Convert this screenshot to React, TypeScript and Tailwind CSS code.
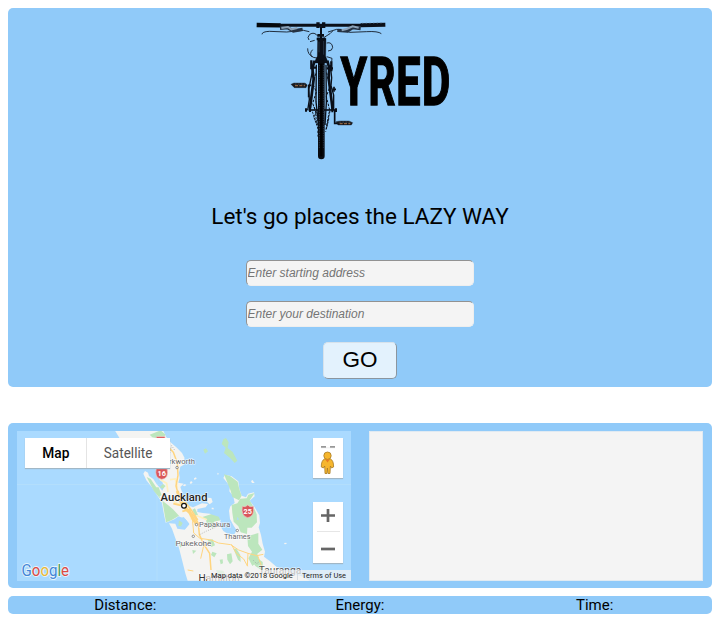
import React from "react";

function Logo() {
  return (
    <svg className="block overflow-visible" width="210" height="150" viewBox="0 0 630 450" aria-label="Tyred">
      <g fill="none" stroke="#0a0f18">
        <path d="M20 30 L92 31" strokeWidth="13" stroke="#05080c" />
        <path d="M88 31 H335" strokeWidth="9" />
        <path d="M332 31 L406 29" strokeWidth="12" />
        <path d="M336 25 L400 24" stroke="#52677d" strokeWidth="2" strokeDasharray="4 7" />
        <path d="M36 58 Q36 50 58 49 L110 51 L160 46 L178 50 M394 56 Q384 48 350 50 L300 52 L260 43 L234 51" strokeWidth="2.5" />
        <path d="M90 40 L112 38 L130 48 L158 43 M262 46 L292 48 L308 38 L332 41" strokeWidth="10" stroke="#253243" />
        <path d="M94 39 L114 36 L124 43 L142 39 M275 46 L290 42 L308 34 L326 38" strokeWidth="6" stroke="#8ba2b8" />
        <path d="M204 22 V39 M221 22 V39" strokeWidth="10" />
        <path d="M204 31 H222" strokeWidth="5" />
        <path d="M213 34 V74" strokeWidth="6" />
        <path d="M202 61 H222 M200 72 H226" strokeWidth="8" />
        <path d="M203 68 L228 70 L227 124 L235 144 H192 L202 124 Z" fill="#0a0f18" strokeWidth="1" />
        <path d="M221 78 V119 M207 80 V112" stroke="#34455b" strokeWidth="2" />
        <path d="M204 64 Q193 49 179 58 Q170 68 177 75 M173 100 Q172 118 190 127 L205 130 M180 80 L194 76 M221 68 L240 56 L248 48 M230 84 Q246 80 248 97 Q247 108 234 108 M230 125 L246 130 L245 140 M188 104 Q176 116 187 126" strokeWidth="2.5" />
        <path d="M194 137 L187 160 L191 192 L180 280 M232 137 L238 160 L236 190 L248 284" strokeWidth="8" />
        <path d="M190 155 L180 205 L176 223 L178 254 L173 286 M241 150 L245 188 L243 212 L251 240 L251 285" strokeWidth="4" />
        <path d="M184 136 V163 M244 139 V169 M181 158 H198 M230 160 H249" strokeWidth="7" />
        <path d="M199 149 L198 260 L207 340 M228 149 L229 264 L225 330" strokeWidth="4" />
        <path d="M198 175 L188 205 L199 231 L188 265 L203 307 L204 365 M230 173 L239 216 L229 245 L239 285 L232 320 L227 350" strokeWidth="3" strokeDasharray="8 4" />
        <path d="M187 290 L201 330 L196 291 M240 288 L229 342 L237 309 M191 275 L202 286 L191 305 L204 340" strokeWidth="2.5" strokeDasharray="7 3" />
        <path d="M176 285 H255" strokeWidth="5" />
        <path d="M168 280 V290 M180 278 V291 M247 277 V292 M258 280 V291" strokeWidth="6" />
        <path d="M214 144 V423" strokeWidth="20" strokeLinecap="round" stroke="#080b11" />
        <path d="M208 150 V402 M220 150 V400" strokeWidth="2" stroke="#35455a" strokeDasharray="4 3" />
        <path d="M214 146 V424" strokeWidth="7" stroke="#000" />
        <path d="M174 211 H184 M176 213 V247 M252 215 V230 M258 223 H247 M254 285 V325 H266" strokeWidth="5" />
        <path d="M123 208 L132 204 H165 L172 210 L168 218 H133 Z M258 320 L270 318 H297 L308 323 L304 330 H264 Z" fill="#18191d" strokeWidth="1" />
        <path d="M134 207 H166 M268 321 H302" stroke="#596775" strokeWidth="2" strokeDasharray="6 3" />
        <path d="M135 212 H165 M269 326 H301" stroke="#8f6341" strokeWidth="4" strokeDasharray="9 4" />
      </g>
      <g fontFamily='Roboto, "Liberation Sans", sans-serif' fontWeight="700" fontSize="202" fill="#000" stroke="#000" strokeWidth="4" strokeLinejoin="miter">
        <text x="271.5" y="269" textLength="80" lengthAdjust="spacingAndGlyphs">Y</text>
        <text x="355" y="269" textLength="82" lengthAdjust="spacingAndGlyphs">R</text>
        <text x="438" y="269" textLength="74" lengthAdjust="spacingAndGlyphs">E</text>
        <text x="515" y="269" textLength="86" lengthAdjust="spacingAndGlyphs">D</text>
      </g>
    </svg>
  );
}

function MapDrawing() {
  return (
    <svg className="block h-full w-full" viewBox="17 431 334 150" preserveAspectRatio="none">
      <rect x="17" y="431" width="334" height="150" fill="#aadaff" />
      <path d="M17 484.5 H351 M157 431 V581" stroke="#b7dffb" strokeWidth=".7" />
      <g transform="translate(110 428) scale(.333333)">
        <g fill="#f4f4f2">
          <path d="M15 8 H160 L168 26 L184 45 L199 58 L216 75 L228 98 L220 111 L211 116 L207 134 L209 150 L205 164 L221 167 L211 177 L215 189 L222 207 L227 223 L239 234 L249 238 L276 226 L294 228 L287 238 L262 243 L262 252 L278 255 L300 257 L316 270 L332 276 L329 290 L340 309 L354 318 L373 319 L380 307 L371 293 L360 273 L357 248 L361 235 L374 225 L370 205 L358 190 L360 175 L340 150 L345 140 L365 145 L385 160 L388 183 L395 203 L408 208 L414 197 L432 193 L434 205 L419 218 L434 238 L448 262 L450 285 L446 298 L453 321 L458 347 L465 371 L462 386 L480 400 L500 417 L540 434 L575 445 L598 458 H233 L226 436 L217 400 L207 360 L195 328 L186 302 L177 286 L196 287 L202 302 L224 305 L238 289 L227 274 L206 265 L193 274 L167 284 L161 254 L156 225 L143 204 L126 178 L109 157 L100 137 L105 129 L114 134 L117 144 L130 153 L140 169 L151 181 L157 188 L162 176 L157 162 L149 156 L136 119 L87 85 L39 47 Z" />
          <path d="M239 165 l4 -6 5 4 -5 5z M292 209 l12 1 4 12 -9 7 -7 -6z M305 239 l5 0 2 5 -7 0z M423 159 l5 -3 3 5 3 4 -8 0z M322 134 l5 3 -4 4z M522 345 l7 -1 1 4 -6 1z M218 172 l7 -4 4 4 -6 3z M252 151 l6 -3 2 4 -7 4z" />
        </g>
        <g fill="#bce6bd">
          <path d="M340 34 L348 30 L356 43 L353 60 L368 72 L382 98 L374 105 L361 91 L342 75 L347 59 L335 48 Z M342 139 L360 144 L383 161 L388 184 L395 203 L387 217 L367 207 L362 188 Z M365 231 L382 226 L391 212 L410 211 L415 200 L434 195 L419 217 L431 238 L440 259 L441 283 L425 299 L412 299 L411 318 L392 313 L385 295 L371 281 L367 255 Z M412 325 L445 315 L445 347 L457 365 L442 377 L447 398 L427 414 L415 391 L426 371 L414 354 Z M157 218 L173 230 L189 244 L207 263 L184 277 L168 283 L162 248 Z M110 147 L122 153 L145 187 L151 212 L132 190 Z M138 178 l8 0 9 24 -7 3z M280 65 l8 -4 6 9 -9 7z M119 20 L152 7 L167 20 L156 34 L127 28z M207 277 l13 4 -2 15 -13 -3z M277 267 L303 259 L326 266 L331 277 L312 281 L310 301 L291 291 L288 276Z M351 379 l13 -3 4 24 -8 9 -8 -14z M370 362 l9 0 12 19 1 21 -8 -7z M207 350 l12 -4 -7 13z M293 337 l15 -3 7 18 -11 5z M307 371 l13 5 -7 12 -10 -7z M329 395 l9 -1 1 12 -7 3z M247 245 l8 -4 9 20 -7 5z M149 178 l10 -10 8 6 -8 8z M247 366 l12 2 -10 10z M318 426 l22 2 8 16 -21 2z M418 391 l20 -4 20 15 1 27 -22 -14z" />
        </g>
        <path d="M203 274 l18 -7 17 20 -12 15 -13 -7 5 -10z M222 91 l11 5 -11 8z M382 266 l5 8 -6 3z" fill="#aadaff" />
        <g fill="none" stroke="#fff0bf" strokeWidth="5">
          <path d="M148 100 L153 156 L170 166 L174 192 M180 155 L196 153 L202 179 M183 214 L203 228 L226 224 M235 243 L244 273 L261 263 L291 275" />
        </g>
        <g fill="none" stroke="#ffd580" strokeWidth="4.5" strokeLinejoin="round">
          <path d="M150 26 L170 52 L190 73 L202 105 L204 142 L198 174 L205 199 L214 219 L233 244 L252 264 L265 286 L268 320 L282 350 L299 376 L303 426" />
          <path d="M248 281 L251 315 L270 331 L304 336 L325 345 L362 350 L386 366 L414 376 L440 383 L460 379 M364 349 L379 376 L401 393 L413 415 M282 349 L272 392 M233 426 L250 429 M443 383 L457 421 M414 376 L412 414" strokeWidth="3" />
          <path d="M202 189 L211 218 L224 239 L240 255 L260 290" strokeWidth="9" />
          <path d="M190 227 L215 233 L227 224 L245 248 L263 276 M217 250 L238 245 L250 282" strokeWidth="5" />
        </g>
        <path d="M179 75 L185 53 L195 68 M269 320 L290 309 L326 294 M430 397 L441 408 L449 398" stroke="#9a9a9a" strokeDasharray="3 4" strokeWidth="2" fill="none" />
        <g fill="#d9575b" stroke="#eec5c4" strokeWidth="2">
          <path d="M139 26 h26 v10 h-26z M139 120 Q150 124 155 117 Q161 124 171 120 Q178 153 155 154 Q132 151 139 120Z M397 235 Q407 239 413 231 Q419 239 430 235 Q435 266 413 269 Q392 264 397 235Z" />
        </g>
      </g>
      <g fill="#fff" fontFamily="Roboto, sans-serif" fontSize="7.3" fontWeight="700" textAnchor="middle">
        <text x="161.8" y="475.6">16</text><text x="247.7" y="513.9">25</text>
      </g>
      <g fontFamily='Roboto, "Liberation Sans", sans-serif' fill="#68686a" stroke="#fff" strokeOpacity=".8" strokeWidth="1.2" paintOrder="stroke" fontSize="8">
        <text x="169" y="464.3" textLength="26" lengthAdjust="spacingAndGlyphs">rkworth</text>
        <text x="160.5" y="500.8" fontSize="11.5" fontWeight="500" fill="#252525" textLength="47" lengthAdjust="spacingAndGlyphs">Auckland</text>
        <text x="199" y="527.2" textLength="31.3" lengthAdjust="spacingAndGlyphs">Papakura</text>
        <text x="175.5" y="545.5" textLength="36" lengthAdjust="spacingAndGlyphs">Pukekohe</text>
        <text x="224" y="539.3" textLength="26.5" lengthAdjust="spacingAndGlyphs">Thames</text>
        <text x="258.7" y="573.7" fontSize="10.3" textLength="42.5" lengthAdjust="spacingAndGlyphs" fill="#555">Tauranga</text>
        <text x="198.5" y="582" fontSize="10.4" textLength="41" lengthAdjust="spacingAndGlyphs" fill="#333">Hamilton</text>
      </g>
      <g fill="#fff" stroke="#777" strokeWidth=".8">
        <circle cx="184" cy="505.8" r="2.4" stroke="#111" strokeWidth="1.2" /><circle cx="177" cy="467.6" r="1.2" /><circle cx="196.5" cy="524.6" r="1.2" /><circle cx="193.3" cy="536.3" r="1.2" /><circle cx="237.3" cy="530.5" r="1.2" />
      </g>
      <text x="21.6" y="575.6" fontSize="16.6" fontFamily="Roboto, sans-serif" fontWeight="400" stroke="#e7f4fb" strokeWidth="1.8" paintOrder="stroke" textLength="47.5" lengthAdjust="spacingAndGlyphs">
        <tspan fill="#4285d8">G</tspan><tspan fill="#dc4944">o</tspan><tspan fill="#e9b735">o</tspan><tspan fill="#4285d8">g</tspan><tspan fill="#469c59">l</tspan><tspan fill="#dc4944">e</tspan>
      </text>
      <path d="M207 570 H351 V581 H207 Z" fill="#f4f4f4" opacity=".7" />
      <path d="M297.5 571 V580" stroke="#c8d4dc" strokeWidth=".7" />
      <g fontFamily='Roboto, "Liberation Sans", sans-serif' fontSize="8" fill="#222">
        <text x="211" y="577.8" textLength="81.8" lengthAdjust="spacingAndGlyphs">Map data ©2018 Google</text>
        <text x="302" y="577.8" textLength="44" lengthAdjust="spacingAndGlyphs">Terms of Use</text>
      </g>
    </svg>
  );
}

function MapControls() {
  return (
    <>
      <div className="absolute left-2 top-[7px] flex h-[30px] w-[145px] bg-white text-sm leading-[31px] shadow-[0_1px_1px_#a1b7c6]">
        <button className="w-[62px] border-r border-[#e4e4e4] text-center font-medium text-black"><span className="inline-block origin-center scale-x-[.98]">Map</span></button>
        <button className="flex-1 text-center text-[#565656]"><span className="inline-block scale-x-[.97]">Satellite</span></button>
      </div>
      <button aria-label="Street view" className="absolute left-[296px] top-[7px] h-10 w-[30px] bg-white shadow-[0_1px_1px_#a1b7c6]">
        <svg width="30" height="40" viewBox="0 0 30 40">
          <path d="M8 9 h5 m4 0 h5" stroke="#777" strokeWidth="1.6" />
          <path d="M8 9.8 h14" stroke="#ddd" strokeWidth=".5" />
          <g fill="#f6b62d" stroke="#a87b25" strokeWidth=".8">
            <path d="M11.5 21 Q8.2 22.5 8.3 29 L10.5 30 L11.7 28 L12 35.5 H14 L14.4 30 L15 35.5 H17 L17.4 28 L18.5 30 L20.6 29 Q20.7 22.5 17.5 21 Z" />
            <circle cx="14.5" cy="17.7" r="3.7" />
          </g>
          <path d="M12.2 21.5 L14.5 24.5 L16.8 21.5 Z" fill="#e67c23" />
        </svg>
      </button>
      <div className="absolute left-[296px] top-[71px] h-[61px] w-[30px] bg-white shadow-[0_1px_1px_#a1b7c6]">
        <button aria-label="Zoom in" className="mx-auto flex h-[30px] w-[23px] items-center justify-center border-b border-[#e6e6e6]">
          <svg className="-mt-px" width="14" height="14" viewBox="0 0 14 14"><path d="M0 6.5 H14 M7 0 V13" stroke="#666" strokeWidth="2.7" /></svg>
        </button>
        <button aria-label="Zoom out" className="flex h-[31px] w-[30px] items-center justify-center">
          <svg width="14" height="14" viewBox="0 0 14 14"><path d="M0 8 H14" stroke="#666" strokeWidth="2.7" /></svg>
        </button>
      </div>
    </>
  );
}

const fieldClass = "block h-[26px] w-[228px] rounded-[5px] border-[1.5px] border-b-[#eee] border-l-[#929292] border-r-[#eee] border-t-[#929292] bg-[#f4f4f4] pb-px pl-[.6px] font-['Liberation_Sans',sans-serif] text-xs italic text-black placeholder:text-[#757575]";

export default function App() {
  return (
    <div className="h-[625px] bg-white px-2 pt-2 font-[Roboto,'Liberation_Sans',sans-serif] text-black">
      <header className="flex h-[379px] flex-col items-center rounded-[5px] bg-[#90caf9] pt-[7px]">
        <div className="mr-[10px]"><Logo /></div>
        <h1 className="mt-[35px] whitespace-nowrap text-[22.5px] leading-8">Let's go places the LAZY WAY</h1>
        <form className="mt-7 flex flex-col items-center" onSubmit={(event) => event.preventDefault()}>
          <input aria-label="Starting address" placeholder="Enter starting address" className={fieldClass} />
          <input aria-label="Destination" placeholder="Enter your destination" className={`mt-[15px] ${fieldClass}`} />
          <button className="mt-[15px] h-[37px] w-[74px] rounded-[5px] border-[1.5px] border-b-[#8b969f] border-l-[#d7e2eb] border-r-[#8b969f] border-t-[#d7e2eb] bg-[#e3f2fd] text-center font-['Liberation_Sans',sans-serif] text-[22.5px] leading-[33px]"><span className="block -translate-y-px">GO</span></button>
        </form>
      </header>
      <main className="mt-9 flex h-[165px] justify-between rounded-[5px] bg-[#90caf9] px-[9px] py-2">
        <section className="relative h-[150px] w-[334px] overflow-hidden">
          <MapDrawing />
          <MapControls />
        </section>
        <section aria-label="Directions" className="h-[150px] w-[334px] border border-[#e0eaf2] bg-[#f4f4f4]" />
      </main>
      <footer className="mt-2 grid h-[17.5px] grid-cols-3 rounded-[5px] bg-[#90caf9] text-center text-[15px] leading-[18px]">
        <span>Distance:</span><span>Energy:</span><span>Time:</span>
      </footer>
    </div>
  );
}
